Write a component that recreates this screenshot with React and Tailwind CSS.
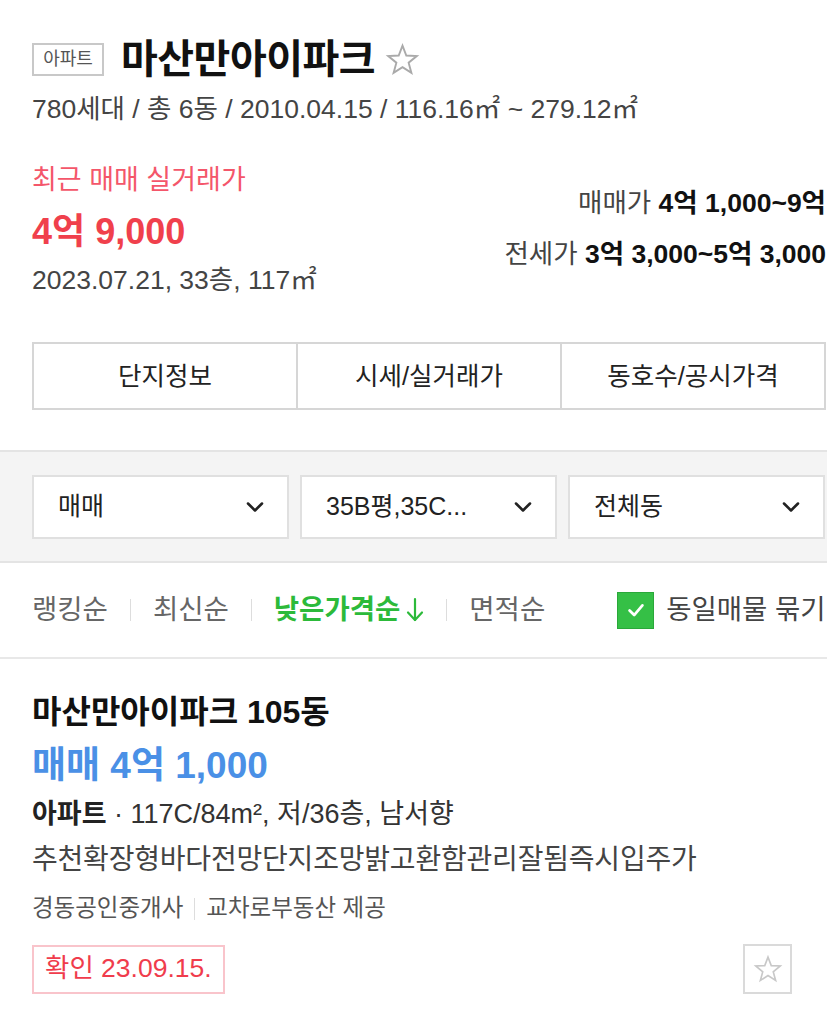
import { ChevronDown } from 'lucide-react';

const font = "font-['Liberation_Sans','Noto_Sans_CJK_KR',sans-serif]";

function Star({ className }) {
  return (
    <svg viewBox="0 0 24 24" className={className} fill="none" stroke="currentColor" strokeWidth="1.3" strokeLinejoin="miter">
      <polygon points="12,2.5 14.6,9.3 21.8,9.6 16.2,14.2 18.1,21.2 12,17.2 5.9,21.2 7.8,14.2 2.2,9.6 9.4,9.3" />
    </svg>
  );
}

function Select({ label }) {
  return (
    <div className="flex-1 h-[64px] bg-white border-2 border-[#e0e0e0] flex items-center justify-between pl-[24px] pr-[18px]">
      <span className="text-[25px] text-[#222] whitespace-nowrap">{label}</span>
      <ChevronDown className="w-[28px] h-[28px] text-[#222]" strokeWidth={2.2} />
    </div>
  );
}

function SortSep() {
  return <span className="mx-[22px] w-px h-[22px] bg-[#dddddd]" />;
}

export default function App() {
  return (
    <div className={`w-[827px] h-[1019px] overflow-hidden bg-white ${font}`}>
      {/* 단지 헤더 */}
      <div className="pl-[32px] pr-px">
        <div className="flex items-center h-[40px] mt-[39px]">
          <span className="h-[33px] w-[72px] border-2 border-[#c8c8c8] flex items-center justify-center text-[18px] text-[#555]">아파트</span>
          <h1 className="ml-[17px] text-[40px] font-bold text-[#111] tracking-[-0.5px] leading-none whitespace-nowrap">마산만아이파크</h1>
          <Star className="ml-[10px] w-[35px] h-[35px] text-[#aaaaaa]" />
        </div>
        <p className="mt-[15px] h-[30px] leading-[30px] text-[26.5px] text-[#444] whitespace-nowrap">
          780세대 / 총 6동 / 2010.04.15 / 116.16㎡ ~ 279.12㎡
        </p>

        <div className="flex justify-between mt-[41px]">
          <div className="whitespace-nowrap">
            <p className="h-[30px] leading-[30px] text-[27px] text-[#f4566a]">최근 매매 실거래가</p>
            <p className="mt-[17px] h-[40px] leading-[40px] text-[36px] font-bold text-[#f0404c]">4억 9,000</p>
            <p className="mt-[12px] h-[32px] leading-[32px] text-[26.5px] text-[#444]">2023.07.21, 33층, 117㎡</p>
          </div>
          <div className="text-right pt-[23px] text-[26.5px] text-[#444] whitespace-nowrap">
            <p className="h-[30px] leading-[30px]">매매가 <b className="text-[#111]">4억 1,000~9억</b></p>
            <p className="mt-[21px] h-[30px] leading-[30px]">전세가 <b className="text-[#111]">3억 3,000~5억 3,000</b></p>
          </div>
        </div>

        {/* 탭 */}
        <div className="mt-[46px] h-[68px] flex border-2 border-[#d6d6d6] text-[25.5px] text-[#222]">
          <div className="flex-1 flex items-center justify-center">단지정보</div>
          <div className="flex-1 flex items-center justify-center border-l-2 border-[#d6d6d6]">시세/실거래가</div>
          <div className="flex-1 flex items-center justify-center border-l-2 border-[#d6d6d6]">동호수/공시가격</div>
        </div>
      </div>

      {/* 필터 */}
      <div className="mt-[40px] h-[113px] bg-[#f4f4f4] border-y-2 border-[#e4e4e4] pl-[32px] pr-[2px] flex items-center gap-[11px]">
        <Select label="매매" />
        <Select label="35B평,35C..." />
        <Select label="전체동" />
      </div>

      {/* 정렬 */}
      <div className="h-[96px] border-b-2 border-[#e8e8e8] pl-[32px] flex items-center text-[27.5px] text-[#666] whitespace-nowrap">
        <span>랭킹순</span>
        <SortSep />
        <span>최신순</span>
        <SortSep />
        <span className="text-[#2cba3a] font-bold flex items-center">
          낮은가격순
          <svg viewBox="0 0 18 26" className="ml-[6px] w-[18px] h-[26px]" fill="none" stroke="currentColor" strokeWidth="2.2" strokeLinecap="round" strokeLinejoin="round">
            <line x1="9" y1="2" x2="9" y2="23" />
            <polyline points="2,15.5 9,23 16,15.5" />
          </svg>
        </span>
        <SortSep />
        <span>면적순</span>
        <span className="ml-[72px] shrink-0 w-[37px] h-[37px] bg-[#35c046] border border-[#2aa83a] flex items-center justify-center">
          <svg viewBox="0 0 24 24" className="w-[22px] h-[22px]" fill="none" stroke="white" strokeWidth="3" strokeLinecap="round" strokeLinejoin="round">
            <polyline points="5,12.5 10,17.5 19,7" />
          </svg>
        </span>
        <span className="ml-[12px] text-[#444]">동일매물 묶기</span>
      </div>

      {/* 매물 */}
      <div className="pl-[32px] pr-[35px] pt-[37px] whitespace-nowrap">
        <p className="h-[32px] leading-[32px] text-[32px] font-bold text-[#111]">마산만아이파크 105동</p>
        <p className="mt-[18px] h-[40px] leading-[40px] text-[37px] font-bold text-[#4a90e6]">매매 4억 1,000</p>
        <p className="mt-[13px] h-[30px] leading-[30px] text-[27px] text-[#333]">
          <b className="text-[#222]">아파트</b> · 117C/84m², 저/36층, 남서향
        </p>
        <p className="mt-[16px] h-[30px] leading-[30px] text-[28px] text-[#444] tracking-[-0.2px]">
          추천확장형바다전망단지조망밝고환함관리잘됨즉시입주가
        </p>
        <div className="mt-[20px] h-[28px] flex items-center text-[23.5px] text-[#555]">
          <span>경동공인중개사</span>
          <span className="mx-[11px] w-px h-[22px] bg-[#dddddd]" />
          <span>교차로부동산 제공</span>
        </div>
        <div className="mt-[21px] flex items-center justify-between">
          <span className="h-[49px] px-[11px] border-2 border-[#f9c4cb] flex items-center text-[26.5px] text-[#f03c4c]">확인 23.09.15.</span>
          <span className="w-[49px] h-[50px] border-2 border-[#dadada] flex items-center justify-center">
            <Star className="w-[30px] h-[30px] text-[#c8c8c8]" />
          </span>
        </div>
      </div>
    </div>
  );
}
